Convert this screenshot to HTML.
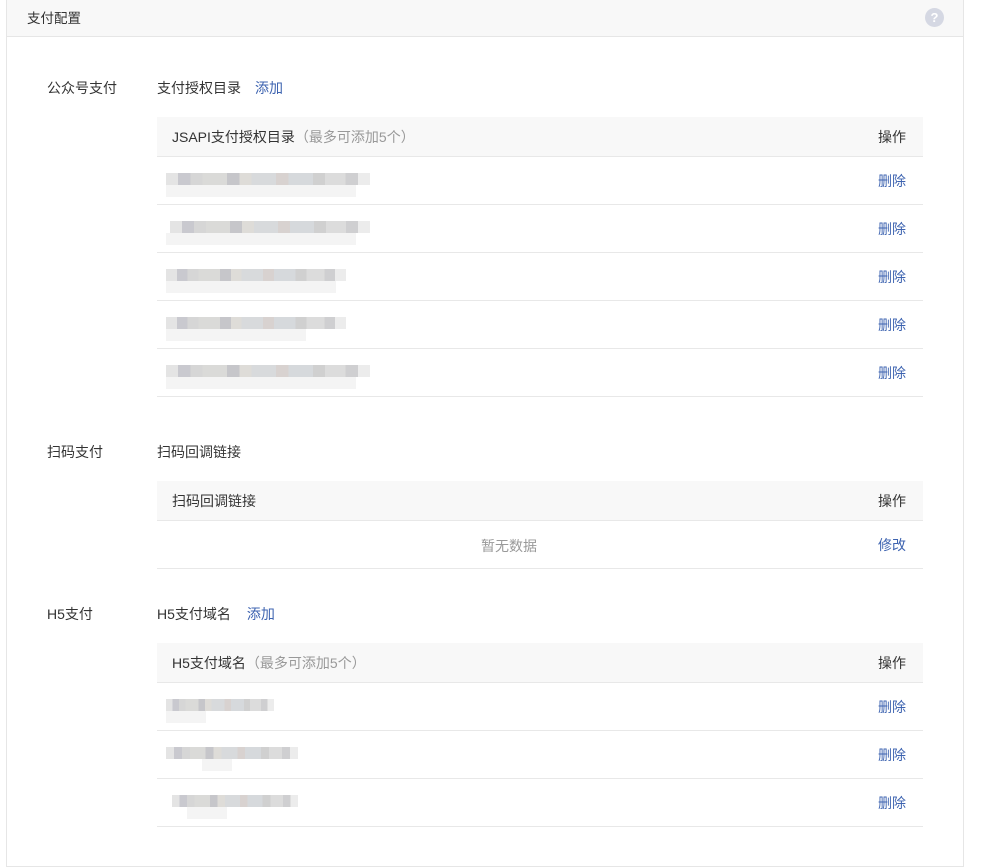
<!DOCTYPE html>
<html><head><meta charset="utf-8">
<style>
*{margin:0;padding:0;box-sizing:border-box}
body{width:990px;height:868px;background:#fff;font-family:"Liberation Sans","Noto Sans CJK SC",sans-serif;font-size:14px;color:#333;position:relative;overflow:hidden}
.panel{position:absolute;left:6px;top:-1px;width:958px;height:868px;border:1px solid #e6e6e6}
.hd{position:absolute;left:0;top:0;width:100%;height:37px;background:#f8f8f8;border-bottom:1px solid #e6e6e6}
.hd span{position:absolute;left:20px;top:7px;font-size:13.5px}
.q{position:absolute;left:918px;top:8px;width:19px;height:19px;border-radius:50%;background:#d5d8e3;color:#fff;font-size:13px;font-weight:bold;text-align:center;line-height:19px}
.abs{position:absolute;white-space:nowrap}
a{color:#3d63b0;text-decoration:none}
.th{position:absolute;left:157px;width:766px;height:40px;background:#f8f8f8;border-bottom:1px solid #e8e8e8}
.th .l{position:absolute;left:15px;top:10px}
.th .r{position:absolute;right:17px;top:10px}
.gray{color:#999}
.tr{position:absolute;left:157px;width:766px;height:48px;border-bottom:1px solid #e8e8e8}
.tr .r{position:absolute;right:17px;top:14px;color:#3d63b0}
.blur{position:absolute;left:9px;top:16px;height:12px;background:linear-gradient(90deg,#e4e4e4 0 6%,#c9c9cf 6% 12%,#d6d6d6 12% 18%,#dadad8 18% 30%,#c6c6ca 30% 36%,#dedcd8 36% 42%,#d8dadc 42% 54%,#d8d2d0 54% 60%,#d6d9dc 60% 72%,#d0d0d0 72% 78%,#dcdcdc 78% 88%,#cfcfd1 88% 94%,#ececec 94%)}
.blur2{position:absolute;left:9px;top:28px;height:12px;background:#f4f4f4}
</style></head><body>
<div class="panel">
<div class="hd"><span>支付配置</span><div class="q">?</div></div>
</div>

<div class="abs" style="left:47px;top:78px">公众号支付</div>
<div class="abs" style="left:157px;top:78px">支付授权目录　<a>添加</a></div>
<div class="th" style="top:117px"><span class="l">JSAPI支付授权目录<span class="gray">（最多可添加5个）</span></span><span class="r">操作</span></div>
<div class="tr" style="top:157px"><div class="blur" style="width:204px"></div><div class="blur2" style="width:190px"></div><span class="r">删除</span></div>
<div class="tr" style="top:205px"><div class="blur" style="left:13px;width:200px"></div><div class="blur2" style="width:190px"></div><span class="r">删除</span></div>
<div class="tr" style="top:253px"><div class="blur" style="width:180px"></div><div class="blur2" style="width:170px"></div><span class="r">删除</span></div>
<div class="tr" style="top:301px"><div class="blur" style="width:180px"></div><div class="blur2" style="width:140px"></div><span class="r">删除</span></div>
<div class="tr" style="top:349px"><div class="blur" style="width:204px"></div><div class="blur2" style="width:190px"></div><span class="r">删除</span></div>

<div class="abs" style="left:47px;top:442px">扫码支付</div>
<div class="abs" style="left:157px;top:442px">扫码回调链接</div>
<div class="th" style="top:481px"><span class="l">扫码回调链接</span><span class="r">操作</span></div>
<div class="tr" style="top:521px"><span class="abs gray" style="left:324px;top:15px">暂无数据</span><span class="r">修改</span></div>

<div class="abs" style="left:47px;top:604px">H5支付</div>
<div class="abs" style="left:157px;top:604px">H5支付域名　<a style="margin-left:2px">添加</a></div>
<div class="th" style="top:643px"><span class="l">H5支付域名<span class="gray">（最多可添加5个）</span></span><span class="r">操作</span></div>
<div class="tr" style="top:683px"><div class="blur" style="width:108px"></div><div class="blur2" style="width:40px"></div><span class="r">删除</span></div>
<div class="tr" style="top:731px"><div class="blur" style="width:132px"></div><div class="blur2" style="left:45px;width:30px"></div><span class="r">删除</span></div>
<div class="tr" style="top:779px"><div class="blur" style="left:15px;width:126px"></div><div class="blur2" style="left:30px;width:40px"></div><span class="r">删除</span></div>
</body></html>
